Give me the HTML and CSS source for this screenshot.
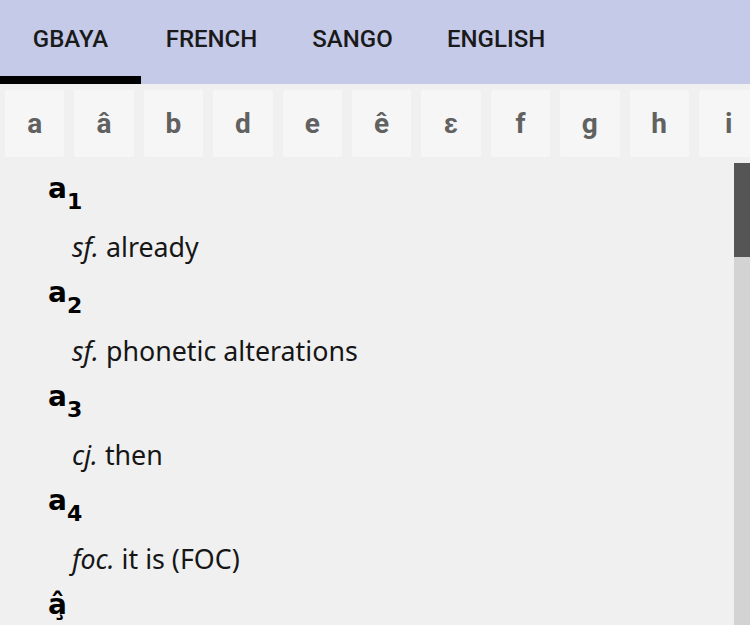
FILE: index.html
```html
<!DOCTYPE html>
<html lang="en">
<head>
<meta charset="utf-8">
<title>Gbaya dictionary</title>
<link rel="stylesheet" href="styles.css">
</head>
<body>
<div class="app">
  <nav class="tabs">
    <div class="tab active">GBAYA</div>
    <div class="tab">FRENCH</div>
    <div class="tab">SANGO</div>
    <div class="tab">ENGLISH</div>
  </nav>
  <div class="letters">
    <div class="letter">a</div>
    <div class="letter">â</div>
    <div class="letter">b</div>
    <div class="letter">d</div>
    <div class="letter">e</div>
    <div class="letter">ê</div>
    <div class="letter">ɛ</div>
    <div class="letter">f</div>
    <div class="letter">g</div>
    <div class="letter">h</div>
    <div class="letter">i</div>
  </div>
  <div class="main">
    <div class="entries">
      <div class="entry">
        <div class="head">a<sub class="num">1</sub></div>
        <div class="def"><i>sf.</i> already</div>
      </div>
      <div class="entry">
        <div class="head">a<sub class="num">2</sub></div>
        <div class="def"><i>sf.</i> phonetic alterations</div>
      </div>
      <div class="entry">
        <div class="head">a<sub class="num">3</sub></div>
        <div class="def"><i>cj.</i> then</div>
      </div>
      <div class="entry">
        <div class="head">a<sub class="num">4</sub></div>
        <div class="def"><i>foc.</i> it is (FOC)</div>
      </div>
      <div class="entry">
        <div class="head">a&#770;&#807;</div>
      </div>
    </div>
    <div class="scrollbar">
      <div class="thumb"></div>
    </div>
  </div>
</div>
</body>
</html>
```
FILE: styles.css
```css
html, body {
  margin: 0;
  padding: 0;
}
body {
  background: #f0f0f0;
  width: 750px;
  height: 625px;
  overflow: hidden;
}
.app {
  display: flex;
  flex-direction: column;
  height: 625px;
}
.tabs {
  display: flex;
  height: 84px;
  background: #c5cae9;
  flex-shrink: 0;
}
.tab {
  box-sizing: border-box;
  min-width: 141px;
  height: 84px;
  padding: 26px 24px 0;
  text-align: center;
  font-family: Roboto, "Liberation Sans", sans-serif;
  font-weight: 500;
  font-size: 24px;
  line-height: 26px;
  color: #1a1a1a;
}
.tab.active {
  box-shadow: inset 0 -8px 0 #000;
}
.letters {
  display: flex;
  gap: 10px;
  padding: 6px 5px 0;
  height: 70px;
  overflow: hidden;
  flex-shrink: 0;
}
.letter {
  flex: 0 0 59.4px;
  height: 67px;
  background: #f6f6f6;
  border-radius: 2px;
  text-align: center;
  font-family: Roboto, "Liberation Sans", sans-serif;
  font-weight: 700;
  font-size: 28px;
  line-height: 67px;
  color: #616161;
}
.main {
  display: flex;
  flex: 1;
  min-height: 0;
}
.entries {
  flex: 1;
  padding: 6px 0 0 48px;
  overflow: hidden;
}
.head {
  font-family: "DejaVu Sans", sans-serif;
  font-weight: 700;
  font-size: 28px;
  line-height: 46px;
  color: #000;
}
.num {
  font-size: 22px;
  line-height: 0;
  vertical-align: -11px;
}
.def {
  margin: 12px 0 0 24px;
  font-family: "Noto Sans", "Open Sans", sans-serif;
  font-size: 26.8px;
  line-height: 46px;
  color: #161616;
}
.def i {
  font-style: italic;
}
.scrollbar {
  width: 16px;
  margin-top: 3px;
  background: #d3d3d3;
  flex-shrink: 0;
}
.thumb {
  height: 94px;
  background: #555;
}
```
